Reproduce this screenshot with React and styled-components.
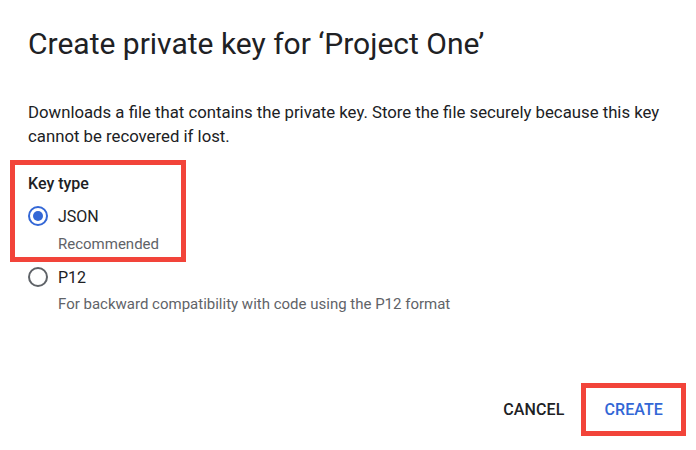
import React from "react";
import styled, { createGlobalStyle } from "styled-components";

const Global = createGlobalStyle`
  html, body { margin: 0; padding: 0; background: #fff; }
  body { font-family: Roboto, "Liberation Sans", Arial, sans-serif; color: #202124; }
  *, *::before, *::after { box-sizing: border-box; }
`;

const Dialog = styled.div`
  display: flex;
  flex-direction: column;
  min-height: 450px;
  padding: 24px 0 19px 28px;
`;

const Title = styled.h1`
  margin: 0;
  font-size: 30px;
  font-weight: 400;
  line-height: 40px;
  color: #202124;
`;

const Description = styled.p`
  margin: 36px 0 0;
  font-size: 16.75px;
  line-height: 24px;
  color: #202124;
  padding-right: 10px;
`;

const Group = styled.div`
  position: relative;
  margin-top: 24px;
`;

const Highlight = styled.div`
  position: relative;
  &::after {
    content: "";
    position: absolute;
    top: ${(p) => p.$top}px;
    left: ${(p) => p.$left}px;
    ${(p) => (p.$width ? `width: ${p.$width}px;` : `right: ${p.$right}px;`)}
    bottom: ${(p) => p.$bottom}px;
    border: 5px solid #f2443a;
    pointer-events: none;
  }
`;

const GroupLabel = styled.div`
  font-size: 16px;
  font-weight: 500;
  line-height: 24px;
  color: #202124;
`;

const Option = styled.label`
  display: flex;
  align-items: center;
  gap: 10px;
  height: 24px;
  margin-top: ${(p) => p.$mt}px;
  font-size: 16px;
  color: #202124;
`;

const Radio = styled.span`
  position: relative;
  width: 20px;
  height: 20px;
  border-radius: 50%;
  border: 2px solid ${(p) => (p.$checked ? "#3367d6" : "#5f6368")};
  &::after {
    content: "";
    display: ${(p) => (p.$checked ? "block" : "none")};
    position: absolute;
    top: 3px;
    left: 3px;
    width: 10px;
    height: 10px;
    border-radius: 50%;
    background: #3367d6;
  }
`;

const Hint = styled.div`
  margin: ${(p) => p.$mt}px 0 0 30px;
  font-size: 15px;
  line-height: 20px;
  color: #5f6368;
`;

const Footer = styled.div`
  margin-top: auto;
  display: flex;
  justify-content: flex-end;
  gap: 4px;
  padding-right: 15px;
`;

const Button = styled.button`
  height: 43px;
  padding: 0 18px;
  border: none;
  background: transparent;
  font-family: Roboto, "Liberation Sans", Arial, sans-serif;
  font-size: 16px;
  font-weight: 500;
  letter-spacing: 0.1px;
  color: ${(p) => (p.$primary ? "#3367d6" : "#202124")};
  cursor: pointer;
`;

export default function App() {
  return (
    <>
      <Global />
      <Dialog>
        <Title>Create private key for ‘Project One’</Title>
        <Description>
          Downloads a file that contains the private key. Store the file securely because this key
          cannot be recovered if lost.
        </Description>
        <Group>
          <Highlight $top={-12} $left={-18} $width={176} $bottom={-8}>
            <GroupLabel>Key type</GroupLabel>
            <Option $mt={8}>
              <Radio $checked />
              JSON
            </Option>
            <Hint $mt={6}>Recommended</Hint>
          </Highlight>
          <Option $mt={11}>
            <Radio />
            P12
          </Option>
          <Hint $mt={5}>For backward compatibility with code using the P12 format</Hint>
        </Group>
        <Footer>
          <Button>CANCEL</Button>
          <Highlight $top={-5} $left={-5} $right={-5} $bottom={-5}>
            <Button $primary>CREATE</Button>
          </Highlight>
        </Footer>
      </Dialog>
    </>
  );
}
